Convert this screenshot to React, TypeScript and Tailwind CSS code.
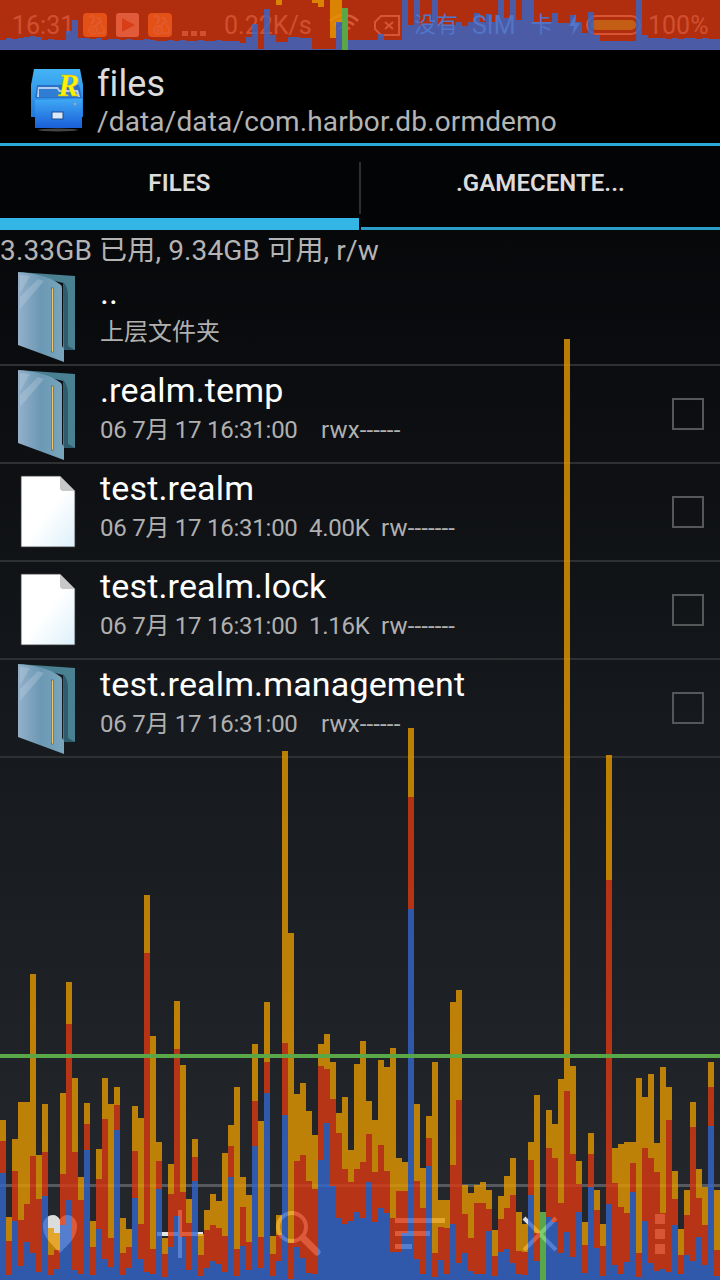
import React from "react";

const D: number[][] = [
[480,543,640],[771,843,945],[537,633,783],[426,780,917],[426,732,846],[42,588,880],[585,717,936],[432,576,708],[805,885,945],[820,870,927],
[399,642,795],[66,192,720],[354,576,930],[651,720,942],[429,492,570],[783,861,945],[567,657,808],[354,477,897],[432,834,921],[381,435,510],
[774,879,945],[807,861,924],[438,573,714],[474,792,897],[-195,-21,936],[228,867,942],[546,603,687],[834,882,951],[612,702,861],[123,267,768],
[315,696,831],[717,789,930],[537,591,663],[822,885,947],[750,810,924],[702,795,903],[723,804,912],[579,828,936],[495,558,651],[381,867,948],
[651,741,858],[705,846,930],[252,423,558],[483,831,924],[126,306,399],[828,882,947],[765,825,903],[-627,249,465],[-81,849,957],[402,603,861],
[369,585,894],[453,663,939],[525,687,942],[252,318,600],[222,327,489],[306,417,678],[459,519,774],[411,627,792],[570,666,783],[312,627,756],
[243,606,774],[423,522,666],[480,636,786],[300,555,744],[321,633,759],[264,774,876],[594,693,876],[606,693,820],[-696,-489,-153],[432,663,897],
[624,744,942],[468,534,618],[306,879,951],[720,801,900],[720,804,942],[126,615,792],[90,420,909],[675,762,879],[699,834,933],[675,729,942],
[666,729,942],[690,747,813],[810,888,947],[708,777,876],[648,744,867],[594,705,909],[756,873,942],[792,876,945],[546,600,705],[405,820,903],
[960,960,960],[450,564,771],[492,594,786],[357,729,879],[-1863,393,816],[318,582,891],[603,672,756],[786,855,939],[519,582,681],[690,750,864],
[792,858,948],[-615,-240,732],[564,669,915],[552,741,942],[546,759,906],[546,609,696],[354,879,951],[411,564,783],[342,594,909],[549,636,933],
[321,759,927],[381,480,936],[633,717,795],[807,885,942],[690,765,885],[426,501,903],[627,714,831],[681,795,915],[306,381,498],[690,870,948],
];

const S: number[] = [
40,38,39,38,37,36,37,40,39,40,40,31,20,38,38,39,38,40,39,39,
40,39,40,40,39,40,41,41,40,41,40,41,41,40,41,41,40,41,41,41,
43,37,24,49,9,35,42,42,37,37,38,38,49,49,49,49,22,50,40,40,
40,40,40,34,40,40,40,0,25,0,25,25,0,25,25,25,22,26,22,13,
22,14,22,0,18,0,20,0,0,22,22,22,13,23,23,15,22,33,12,35,
41,41,41,41,41,41,0,35,38,38,38,39,38,39,38,38,39,38,39,39,
];

const BLUE = "#3366cc";
const RED = "#dc3912";
const ORANGE = "#e69800";

function Overlay() {
  return (
    <svg className="absolute inset-0 pointer-events-none" width="720" height="1280" viewBox="0 0 720 1280" shapeRendering="crispEdges">
      <g fillOpacity="0.8">
        <rect x="0" y="0" width="720" height="50" fill={RED} />
        {S.map((v, i) => (i === 57 ? null : <rect key={i} x={i * 6} y={v} width="6" height={50 - v} fill={BLUE} />))}
        <rect x="276" y="0" width="6" height="5" fill={ORANGE} />
        <rect x="312" y="0" width="6" height="3" fill={ORANGE} />
        <rect x="318" y="0" width="6" height="7" fill={ORANGE} />
        <rect x="330" y="0" width="6" height="38" fill={ORANGE} />
        <rect x="336" y="0" width="6" height="22" fill={ORANGE} />
        {D.map(([o, r, b], i) => {
          const Y = (z: number) => Math.round(960 + z / 3);
          return (
            <g key={i}>
              <rect x={i * 6} y={Y(o)} width="6" height={Y(r) - Y(o)} fill={ORANGE} />
              <rect x={i * 6} y={Y(r)} width="6" height={Y(b) - Y(r)} fill={RED} />
              <rect x={i * 6} y={Y(b)} width="6" height={1280 - Y(b)} fill={BLUE} />
            </g>
          );
        })}
        <rect x="540" y="1212" width="6" height="68" fill="#68c854" />
      </g>
      <rect x="342" y="8" width="6" height="42" fill="#5aa748" />
      <rect x="0" y="1054" width="720" height="4" fill="#5aa748" />
    </svg>
  );
}

function UcIcon() {
  return (
    <svg width="24" height="24" viewBox="0 0 24 24">
      <rect x="0" y="0" width="24" height="24" rx="4" fill="#ffb02e" />
      <path d="M6 4c2-2 5-1 5 2 0 2-2 3-2 5M14 5l3 1 1 3-3 1-2 3" fill="none" stroke="#f6e0b0" strokeWidth="2" />
      <circle cx="10" cy="17" r="4" fill="none" stroke="#f6e0b0" strokeWidth="1.5" />
      <circle cx="10" cy="17" r="1.5" fill="none" stroke="#f6e0b0" strokeWidth="1" />
      <path d="M14 20h7v-5l-3-3" fill="none" stroke="#f6e0b0" strokeWidth="1.5" />
    </svg>
  );
}

function PlayIcon() {
  return (
    <svg width="23" height="24" viewBox="0 0 23 24">
      <rect x="0" y="0" width="23" height="24" rx="3" fill="#f2e2dc" />
      <path d="M6 5l13 7-13 7z" fill="#c9582f" />
    </svg>
  );
}

function Wifi() {
  return (
    <svg width="32" height="24" viewBox="0 0 32 24" fill="none" stroke="#d0d0d0" strokeWidth="2.5">
      <path d="M2 8c8-8 20-8 28 0" />
      <path d="M6 12c6-5 14-5 20 0" />
      <path d="M10 16c4-3 8-3 12 0" />
      <path d="M16 23l-4-4c2-2 6-2 8 0z" fill="#d0d0d0" stroke="none" />
    </svg>
  );
}

function SimX() {
  return (
    <svg width="26" height="21" viewBox="0 0 26 21" fill="none" stroke="#c0c0c0" strokeWidth="2">
      <path d="M7 1h18v19H7L1 14V7z" />
      <path d="M11 7l8 7M19 7l-8 7" />
    </svg>
  );
}

function Battery() {
  return (
    <div className="flex items-center gap-[5px]">
      <svg width="13" height="24" viewBox="0 0 13 24" className="relative z-10">
        <path d="M8 1L1 13h5l-2 10 8-13H7z" fill="#5275c8" />
      </svg>
      <div className="w-[55px] h-[20px] rounded-[10px] border-2 border-[#c4c4c4] p-[3px]">
        <div className="h-full w-full rounded-[6px] bg-[#66ee22]" />
      </div>
    </div>
  );
}

function StatusBar() {
  return (
    <div className="h-[50px] bg-black flex items-center text-[25px] leading-none text-[#a4a4a4] pl-[12px]">
      <span className="w-[71px]">16:31</span>
      <UcIcon />
      <span className="w-[9px]" />
      <PlayIcon />
      <span className="w-[9px]" />
      <UcIcon />
      <div className="ml-[10px] w-[30px] flex gap-[3px] mt-[16px]">
        <span className="w-[6px] h-[5px] bg-[#a4a4a4]" />
        <span className="w-[6px] h-[5px] bg-[#a4a4a4]" />
        <span className="w-[6px] h-[5px] bg-[#a4a4a4]" />
      </div>
      <span className="ml-[12px] w-[104px]">0.22K/s</span>
      <Wifi />
      <span className="w-[14px]" />
      <SimX />
      <div className="relative z-10 ml-[14px] w-[154px] flex items-center text-[#5275c8]">
        <span className="text-[22px]">没有</span>
        <span className="ml-[14px]">SIM</span>
        <span className="ml-[15px] text-[22px]">卡</span>
      </div>
      <Battery />
      <span className="ml-[7px]">100%</span>
    </div>
  );
}

function AppIcon() {
  return (
    <svg width="56" height="64" viewBox="0 0 56 64" className="shrink-0">
      <defs>
        <linearGradient id="lid" x1="0" y1="0" x2="0" y2="1">
          <stop offset="0" stopColor="#45b5f5" />
          <stop offset="1" stopColor="#1f79dc" />
        </linearGradient>
        <linearGradient id="front" x1="0" y1="0" x2="0" y2="1">
          <stop offset="0" stopColor="#3fa9f5" />
          <stop offset="1" stopColor="#1a5ed8" />
        </linearGradient>
      </defs>
      <path d="M4 1h46l3 16v32H1V17z" fill="url(#lid)" />
      <path d="M7 17h42l3 13H5z" fill="#2a70c8" />
      <path d="M8 19h20l2 3h18l2 7H7z" fill="#b4cdea" />
      <path d="M9 21h18l2 3h17l2 5H9z" fill="#2f7ed4" />
      <path d="M5 32l47 -1v29H5z" fill="url(#front)" />
      <rect x="22" y="44" width="11" height="7" fill="#dbe8f8" stroke="#1d4a90" strokeWidth="1" />
      <circle cx="45" cy="36" r="1.5" fill="#8fa8c0" />
      <ellipse cx="28" cy="62" rx="20" ry="1.5" fill="#444" />
      <text x="28" y="28" fontFamily="'Liberation Serif', serif" fontWeight="700" fontStyle="italic" fontSize="32" fill="#fff200" stroke="#c7a800" strokeWidth="0.3">R</text>
    </svg>
  );
}

function Header() {
  return (
    <div className="h-[96px] bg-black border-b-[3px] border-[#29a9d8] flex items-start pl-[30px]">
      <div className="mt-[18px] w-[68px]">
        <AppIcon />
      </div>
      <div className="flex flex-col -ml-[1px]">
        <span className="text-[36px] leading-[42px] mt-[13px] text-[#dcdcdc] tracking-[0.1px]">files</span>
        <span className="text-[28px] leading-[32px] mt-[1px] text-[#b4b4b4] tracking-[0.15px]">/data/data/com.harbor.db.ormdemo</span>
      </div>
    </div>
  );
}

function Tabs() {
  return (
    <div className="h-[84px] bg-[#030405] flex text-[24px] font-semibold text-[#dcdcdc] leading-none">
      <div className="w-[359px] h-full border-b-[12px] border-[#33b5e5] flex items-center justify-center pt-[2px] tracking-[0.2px]">
        FILES
      </div>
      <div className="w-[2px] h-[52px] mt-[16px] bg-[#2c2e30]" />
      <div className="flex-1 h-full border-b-[3px] border-[#2a9dc8] flex items-center justify-center pb-[7px] tracking-[0.05px]">
        .GAMECENTE...
      </div>
    </div>
  );
}

function Folder() {
  return (
    <svg width="60" height="92" viewBox="0 0 60 92" className="block">
      <defs>
        <linearGradient id="ff" x1="0" y1="0" x2="1" y2="0">
          <stop offset="0" stopColor="#94b0ca" />
          <stop offset="0.5" stopColor="#6b98b4" />
          <stop offset="1" stopColor="#7aa6bd" />
        </linearGradient>
      </defs>
      <path d="M2 1l57 4v74l-10 -1 -2 0V12z" fill="#4a8192" />
      <path d="M47 11c3 2 5 8 5 14v50l7 4H48z" fill="#2e5c6c" />
      <path d="M2 1c14 1 32 4 43 13 1 1 1 3 1 5v56l2 3 0 13L2 74z" fill="url(#ff)" />
      <path d="M4 4l10 1L4 22zM4 26L22 8l6 2L4 38z" fill="#c3d6e4" fillOpacity="0.3" />
      <rect x="35.5" y="17" width="2" height="64" fill="#f3c56a" stroke="#33505c" strokeWidth="0.5" />
    </svg>
  );
}

function FileIcon() {
  return (
    <svg width="60" height="76" viewBox="0 0 60 76" className="block">
      <defs>
        <linearGradient id="pg" x1="0" y1="0" x2="1" y2="1">
          <stop offset="0" stopColor="#ffffff" />
          <stop offset="0.5" stopColor="#ffffff" />
          <stop offset="1" stopColor="#dcf0fa" />
        </linearGradient>
      </defs>
      <path d="M5 2h39l15 15v56H5z" fill="url(#pg)" stroke="#333" strokeWidth="0.8" />
      <path d="M44 2l15 15H46l-2-2z" fill="#c8c8c8" />
    </svg>
  );
}

type RowP = { kind: "folder" | "file"; name: string; date?: string; size?: string; perm?: string; sub?: string; check?: boolean };

function Row({ kind, name, date, size, perm, sub, check = true }: RowP) {
  return (
    <div className="h-[98px] border-b-2 border-[#2e3032] flex items-start relative">
      <div className={kind === "folder" ? "w-[100px] shrink-0 pl-[16px] pt-[3px]" : "w-[100px] shrink-0 pl-[16px] pt-[10px]"}>
        {kind === "folder" ? <Folder /> : <FileIcon />}
      </div>
      <div className="flex-1 flex flex-col">
        <span className="text-[34px] leading-[40px] mt-[4px] text-white tracking-[0.15px]">{name}</span>
        {sub ? (
          <span className="text-[24px] leading-[36px] mt-[2px] text-[#b0b0b0]">{sub}</span>
        ) : (
          <div className="text-[24px] leading-[36px] mt-[2px] text-[#b0b0b0] flex">
            <span className={size ? "w-[281px] shrink-0 tracking-[-0.25px] flex" : "w-[221px] shrink-0 tracking-[-0.25px] flex"}>
              <span className="w-[209px] shrink-0">{date}</span>
              <span>{size}</span>
            </span>
            <span className="tracking-[0.15px]">{perm}</span>
          </div>
        )}
      </div>
      {check && <div className="w-[32px] h-[32px] border-2 border-[#555759] mr-[16px] mt-[32px]" />}
    </div>
  );
}

function List() {
  return (
    <div className="flex-1 flex flex-col bg-gradient-to-b from-[#07080a] via-[#15181c] via-50% to-[#23272c]">
      <div className="h-[38px] text-[28px] leading-[42px] text-[#b4b4b4] whitespace-pre tracking-[0.15px]">3.33GB 已用, 9.34GB 可用, r/w</div>
      <Row kind="folder" name=".." sub="上层文件夹" check={false} />
      <Row kind="folder" name=".realm.temp" date="06 7月 17 16:31:00" size="" perm="rwx------" />
      <Row kind="file" name="test.realm" date="06 7月 17 16:31:00" size="4.00K" perm="rw-------" />
      <Row kind="file" name="test.realm.lock" date="06 7月 17 16:31:00" size="1.16K" perm="rw-------" />
      <Row kind="folder" name="test.realm.management" date="06 7月 17 16:31:00" size="" perm="rwx------" />
    </div>
  );
}

function ActionBar() {
  return (
    <div className="h-[96px] border-t-[3px] border-[#565a5e] grid grid-cols-6 bg-[#23272c]">
      <div className="flex items-center justify-center">
        <svg width="36" height="40" viewBox="0 0 36 40">
          <path d="M18 39C10 30 1 24 1 12 1 5 6 1 11 1c3 0 6 2 7 5 1-3 4-5 7-5 5 0 10 4 10 11 0 12-9 18-17 27z" fill="#dcdcdc" />
        </svg>
      </div>
      <div className="flex items-center justify-center">
        <svg width="46" height="48" viewBox="0 0 46 48" fill="#e4e4e4">
          <rect x="0" y="22" width="46" height="4" />
          <rect x="21" y="0" width="4" height="48" />
        </svg>
      </div>
      <div className="flex items-center justify-center">
        <svg width="48" height="48" viewBox="0 0 48 48" fill="none" stroke="#dcdcdc" className="ml-[-2px]">
          <circle cx="17" cy="17" r="14" strokeWidth="4" />
          <path d="M28 28l14 14" strokeWidth="7" strokeLinecap="round" />
        </svg>
      </div>
      <div className="flex items-center justify-center">
        <svg width="50" height="32" viewBox="0 0 50 32" fill="#dcdcdc">
          <rect x="0" y="0" width="50" height="5" />
          <rect x="0" y="13" width="35" height="5" />
          <rect x="0" y="26" width="17" height="5" />
        </svg>
      </div>
      <div className="flex items-center justify-center">
        <svg width="36" height="36" viewBox="0 0 36 36" fill="none" stroke="#dcdcdc" strokeWidth="4">
          <path d="M2 2l32 32M34 2L2 34" />
        </svg>
      </div>
      <div className="flex items-center justify-center">
        <svg width="10" height="40" viewBox="0 0 10 40" fill="#c8c8c8">
          <rect x="0" y="0" width="10" height="10" />
          <rect x="0" y="15" width="10" height="10" />
          <rect x="0" y="30" width="10" height="10" />
        </svg>
      </div>
    </div>
  );
}

export default function App() {
  return (
    <div className="relative w-[720px] h-[1280px] overflow-hidden flex flex-col bg-black font-['Roboto','Noto_Sans_CJK_SC',sans-serif]">
      <StatusBar />
      <Header />
      <Tabs />
      <List />
      <ActionBar />
      <Overlay />
    </div>
  );
}
